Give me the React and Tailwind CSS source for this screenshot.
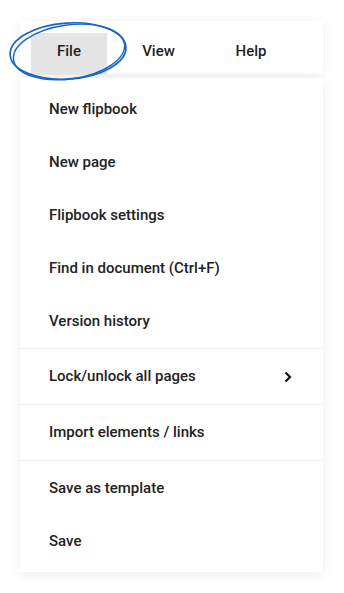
import React from "react";

const items = [
  { label: "New flipbook", h: "h-[53px]" },
  { label: "New page", h: "h-[53px]" },
  { label: "Flipbook settings", h: "h-[53px]" },
  { label: "Find in document (Ctrl+F)", h: "h-[53px]" },
  { label: "Version history", h: "h-[54px]", divider: true },
  { label: "Lock/unlock all pages", h: "h-[56px]", chevron: true, divider: true },
  { label: "Import elements / links", h: "h-[56px]", divider: true },
  { label: "Save as template", h: "h-[54px]" },
  { label: "Save", h: "h-[52px]" },
];

export default function App() {
  return (
    <div
      className="relative w-[344px] h-[593px] bg-white overflow-hidden pl-[20px] pt-[21px]"
      style={{ fontFamily: "Roboto, 'Liberation Sans', sans-serif" }}
    >
      <div className="w-[303px] h-[53px] bg-white shadow-[0_1px_10px_rgba(0,0,0,0.07)] flex items-end pl-[11px] text-[15px] font-medium text-[#1f1f1f]">
        <div className="w-[76px] h-[42px] bg-[#e5e5e5] flex items-center justify-center pb-[6px] -mb-[1px]">File</div>
        <div className="w-[103px] h-[42px] flex items-center justify-center pb-[6px] -mb-[1px]">View</div>
        <div className="w-[82px] h-[42px] flex items-center justify-center pb-[6px] -mb-[1px]">Help</div>
      </div>
      <div className="mt-[4px] w-[303px] bg-white shadow-[0_2px_12px_rgba(0,0,0,0.08)] pt-[5px] pb-[5px]">
        {items.map((it, i) => (
          <div
            key={i}
            className={`${it.h} flex items-center pl-[29px] pr-[31px] text-[15px] font-medium text-[#222] ${it.divider ? "border-b border-[#f0f0f0]" : ""}`}
          >
            <span className="flex-1">{it.label}</span>
            {it.chevron && (
              <svg width="8" height="12" viewBox="0 0 8 12">
                <path d="M1.5 1.5 L6 6 L1.5 10.5" fill="none" stroke="#111" strokeWidth="2.2" />
              </svg>
            )}
          </div>
        ))}
      </div>
      <svg
        className="absolute left-0 top-0 pointer-events-none"
        width="344"
        height="100"
        viewBox="0 0 344 100"
      >
        <ellipse cx="68" cy="51" rx="58" ry="28" transform="rotate(-4 68 51)" fill="none" stroke="#1565c8" strokeWidth="1.7" />
        <ellipse cx="69" cy="52" rx="56" ry="27" transform="rotate(-8 69 52)" fill="none" stroke="#1565c8" strokeWidth="1.4" />
      </svg>
    </div>
  );
}
